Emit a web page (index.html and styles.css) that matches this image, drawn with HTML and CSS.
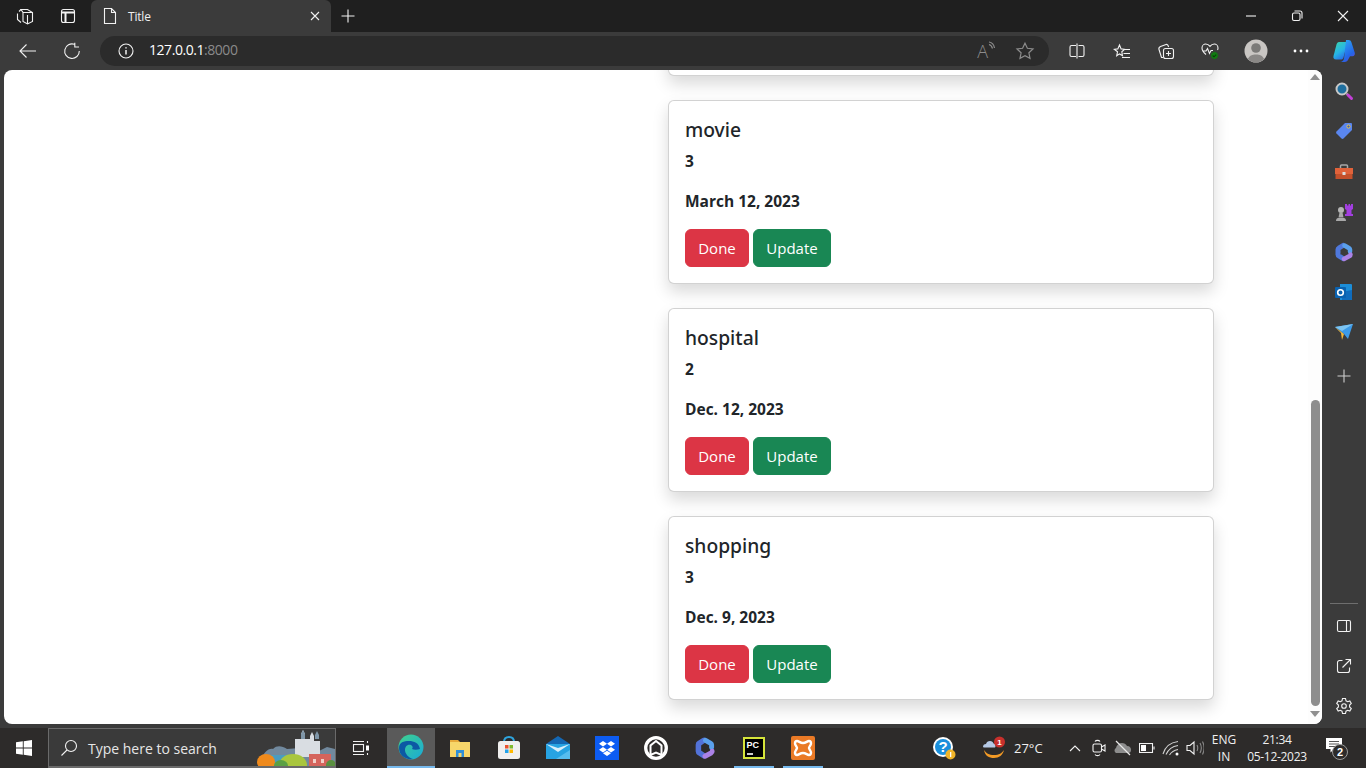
FILE: index.html
```html
<!DOCTYPE html>
<html lang="en">
<head>
<meta charset="utf-8">
<title>Title</title>
<link rel="stylesheet" href="styles.css">
</head>
<body>
<div class="tabstrip">
  <span class="slot s-w1"><svg width="20" height="20" viewBox="0 0 20 20" class="st"><path d="M5 3.500h6.500l5 3v9l-5 2.500-4.500-2.500V6.500zM3 5.500 5 3.500M1.500 7.500v6l3.500 3M7 6.500h9.500M11.500 9v9"/></svg></span>
  <span class="slot s-w2"><svg width="18" height="18" viewBox="0 0 18 18" class="st"><rect x="2.500" y="2.500" width="13" height="13" rx="2"/><path d="M2.500 5.500h13M6.500 5.500v10" stroke-width="2"/></svg></span>
  <div class="tab">
    <svg width="16" height="18" viewBox="0 0 16 18" class="st"><path d="M2.500 1.500h7l4 4v11h-11zM9.500 1.500v4h4"/></svg>
    <span class="tab-title">Title</span>
    <svg width="12" height="12" viewBox="0 0 12 12" class="st tab-x"><path d="M2 2l8 8M10 2l-8 8"/></svg>
  </div>
  <span class="slot s-plus"><svg width="16" height="16" viewBox="0 0 16 16" class="st"><path d="M8 1.500v13M1.500 8h13"/></svg></span>
  <div class="winctl">
    <span class="slot s-win"><svg width="12" height="12" viewBox="0 0 12 12" class="st"><path d="M1 6h10"/></svg></span>
    <span class="slot s-win"><svg width="12" height="12" viewBox="0 0 12 12" class="st"><rect x="1.500" y="3" width="7.500" height="7.500" rx="1.500"/><path d="M3.500 1h5.500a2 2 0 0 1 2 2v5.500"/></svg></span>
    <span class="slot s-win"><svg width="12" height="12" viewBox="0 0 12 12" class="st"><path d="M1 1l10 10M11 1L1 11"/></svg></span>
  </div>
</div>

<div class="toolbar">
  <span class="slot s-back"><svg width="20" height="16" viewBox="0 0 20 16" class="st"><path d="M18 8H2M8.500 1.500 2 8l6.500 6.500"/></svg></span>
  <span class="slot s-reload"><svg width="18" height="18" viewBox="0 0 18 18" class="st"><path d="M11.500 2.300A7.300 7.300 0 1 0 16.300 9M11.800 .8v4.200h4.200"/></svg></span>
  <div class="address">
    <svg class="st addr-info" width="16" height="16" viewBox="0 0 16 16"><circle cx="8" cy="8" r="7"/><path d="M8 7v4.500M8 4.200v1.300" stroke-width="1.500"/></svg>
    <span class="url"><span class="url-host">127.0.0.1</span><span class="url-port">:8000</span></span>
    <span class="addr-actions">
      <span class="read">A<svg width="8" height="10" viewBox="0 0 8 10" class="st-dim"><path d="M1 1c3 .5 5 3 5.500 6M1 3.500c2 .5 3 2 3.500 4"/></svg></span>
      <svg width="20" height="20" viewBox="0 0 20 20" class="st-dim"><path d="M10 2.200l2.400 5.100 5.600.7-4.100 3.800 1.100 5.500L10 14.600l-5 2.700 1.100-5.500L2 8l5.600-.7z"/></svg>
    </span>
  </div>
  <div class="tools">
    <span class="slot s-tool t1"><svg width="16" height="16" viewBox="0 0 16 16" class="st"><path d="M7 2.500H2.500a1.500 1.500 0 0 0-1.500 1.500v8a1.500 1.500 0 0 0 1.500 1.500H7M9.500 2.500h4a1.500 1.500 0 0 1 1.500 1.500v8a1.500 1.500 0 0 1-1.500 1.500h-4M8 .5v15"/></svg></span>
    <span class="slot s-tool t2"><svg width="18" height="18" viewBox="0 0 18 18" class="st"><path d="M6.500 1.500l1.600 3.900 3.400.4-2.700 2.500.7 3.800-3-1.700-2.800 1.900.8-4L1.300 5.800l3.500-.4zM11 6h6M10.500 10h6.500M9 14h8" transform="translate(0 1.500)"/></svg></span>
    <span class="slot s-tool t3"><svg width="18" height="18" viewBox="0 0 18 18" class="st"><path d="M6 15.500H4.500L2 7.500c-.5-1.500.5-2.500 1.500-3L9 2.500c1-.3 2 .3 2.300 1.500l.3 1"/><rect x="6.500" y="6.500" width="10" height="10" rx="2"/><path d="M11.500 9v5M9 11.500h5"/></svg></span>
    <span class="slot s-tool t4"><svg width="18" height="18" viewBox="0 0 18 18" class="st"><path d="M5 12.500C2.500 10.500 1 8.500 1 6c0-2.500 2-4 3.700-4C6.500 2 8 3 9 4.300 10 3 11.500 2 13.300 2 15 2 17 3.500 17 6c0 .8-.2 1.500-.5 2M1.500 9h3.500l1.500-2.500 2 5 1.500-3h2"/><circle cx="13.500" cy="13.500" r="4" class="heal"/><path d="M11.700 13.500l1.300 1.300 2.200-2.200" class="healck"/></svg></span>
    <span class="slot s-avatar"><svg width="24" height="24" viewBox="0 0 24 24"><circle cx="12" cy="12" r="11.500" fill="#c9c6c3"/><circle cx="12" cy="9" r="4.800" fill="#7b7a78"/><path d="M3.800 20c1.500-3.500 4.500-4.600 8.200-4.600s6.700 1.100 8.200 4.600a11.500 11.500 0 0 1-16.400 0z" fill="#8a8886"/></svg></span>
    <span class="slot s-tool t5"><svg width="16" height="4" viewBox="0 0 16 4" class="fillw"><circle cx="2" cy="2" r="1.400"/><circle cx="8" cy="2" r="1.400"/><circle cx="14" cy="2" r="1.400"/></svg></span>
    <span class="slot s-copilot"><svg width="24" height="24" viewBox="0 0 24 24"><defs><linearGradient id="cp1" x1="0" y1="0" x2=".6" y2="1"><stop offset="0" stop-color="#3ad6a8"/><stop offset=".6" stop-color="#27b4e6"/><stop offset="1" stop-color="#2a6fe8"/></linearGradient><linearGradient id="cp2" x1=".2" y1="0" x2=".8" y2="1"><stop offset="0" stop-color="#2fa8f4"/><stop offset=".7" stop-color="#2466e8"/><stop offset="1" stop-color="#5b49d8"/></linearGradient></defs><path d="M7 3h8.500l-4 15.500c-.4 1.500-1.300 2-2.500 2H4C2 20.500 1 19 1.500 17L4.500 5.500C5 4 5.700 3 7 3z" fill="url(#cp1)"/><path d="M14 1h2.500c1.500 0 2.500.8 3 2.500l3.200 10c.6 2-.3 3.700-2.200 3.700H18L16.500 20c-.8 2-2 3-4 3H8c2.200 0 3.500-1.300 4-3.200z" fill="url(#cp2)"/></svg></span>
  </div>
</div>

<div class="mainrow">
  <div class="page">
    <div class="viewport">
      <div class="cards">
        <div class="card"></div>
        <article class="card"><h5 class="card-title">movie</h5><h6 class="card-num">3</h6><h6 class="card-date">March 12, 2023</h6><div class="btns"><button class="btn btn-done">Done</button> <button class="btn btn-update">Update</button></div></article>
        <article class="card"><h5 class="card-title">hospital</h5><h6 class="card-num">2</h6><h6 class="card-date">Dec. 12, 2023</h6><div class="btns"><button class="btn btn-done">Done</button> <button class="btn btn-update">Update</button></div></article>
        <article class="card"><h5 class="card-title">shopping</h5><h6 class="card-num">3</h6><h6 class="card-date">Dec. 9, 2023</h6><div class="btns"><button class="btn btn-done">Done</button> <button class="btn btn-update">Update</button></div></article>
      </div>
    </div>
    <div class="scrollbar">
      <span class="arrow-up"></span>
      <span class="thumb"></span>
      <span class="arrow-down"></span>
    </div>
  </div>
  <aside class="sidebar">
    <div class="side-top">
      <span class="side-item"><svg width="20" height="20" viewBox="0 0 20 20"><circle cx="8" cy="8" r="5.500" fill="#1f6f9f" stroke="#c8c8c8" stroke-width="2"/><path d="M12.500 12.500l1.500 1.500" stroke="#aaa" stroke-width="2"/><path d="M14 14l3.500 3.500" stroke="#c23fd6" stroke-width="3" stroke-linecap="round"/></svg></span>
      <span class="side-item"><svg width="20" height="20" viewBox="0 0 20 20"><path d="M11 2h6a1 1 0 0 1 1 1v6L9.500 17.500a1.500 1.500 0 0 1-2 0l-5-5a1.500 1.500 0 0 1 0-2z" fill="#5a86ee"/><circle cx="14.500" cy="5.500" r="1.600" fill="#3a5bb8" stroke="#f3cb3a"/></svg></span>
      <span class="side-item"><svg width="20" height="20" viewBox="0 0 20 20"><path d="M6.500 6V4c0-.7.500-1 1-1h5c.5 0 1 .3 1 1v2" fill="none" stroke="#a8a8a8" stroke-width="1.500"/><rect x="1" y="6" width="18" height="6" fill="#e0623a"/><rect x="1.500" y="12" width="17" height="5" fill="#c4502b"/><rect x="8.500" y="10" width="3" height="3" fill="#ddd"/></svg></span>
      <span class="side-item"><svg width="20" height="20" viewBox="0 0 20 20"><circle cx="7" cy="8" r="3" fill="#b5b5b5"/><path d="M5.500 10.500h3l1 5h-5zM2 19c0-2 1-3 2-3h6c1 0 2 1 2 3z" fill="#a8a8a8"/><path d="M11 2h2v1.500h1.500V2h1.500v1.500h1V2H19v5l-1.500 1v4H19v2h-8v-2h1.500V8L11 7z" fill="#a23ee0"/></svg></span>
      <span class="side-item"><svg width="20" height="20" viewBox="0 0 20 20"><path d="M9 3.500 4.800 6.200a1.500 1.500 0 0 0-.8 1.300v5a1.500 1.500 0 0 0 .8 1.300L9 16.500" fill="none" stroke="#4f78dc" stroke-width="5" stroke-linecap="round"/><path d="M10.500 3.500l4.700 2.800c.5.300.8.800.8 1.300V9.500" fill="none" stroke="#5aa0ec" stroke-width="4.500" stroke-linecap="round"/><path d="M16.500 12.500c0 .8-.5 1.300-1 1.600L10 17" fill="none" stroke="#ab82e6" stroke-width="4.500" stroke-linecap="round"/></svg></span>
      <span class="side-item"><svg width="20" height="20" viewBox="0 0 20 20"><path d="M6 2h11a1 1 0 0 1 1 1v14a1 1 0 0 1-1 1H6z" fill="#1c8ed8"/><path d="M8 10l10-2v9a1 1 0 0 1-1 1H8z" fill="#0f6cbd"/><rect x="1" y="5" width="11" height="11" rx="1" fill="#0a62b0"/><circle cx="6.500" cy="10.500" r="2.800" fill="none" stroke="#fff" stroke-width="1.600"/></svg></span>
      <span class="side-item"><svg width="20" height="20" viewBox="0 0 20 20"><path d="M1 5l18-3-5 15-4-5z" fill="#3d9be8"/><path d="M1 5l9 7-2 6-1-7z" fill="#f3b83a"/><path d="M19 2 8 9 1 5z" fill="#7cc4f2"/></svg></span>
      <span class="side-item side-plus"><svg width="14" height="14" viewBox="0 0 14 14" class="st-soft"><path d="M7 .5v13M.5 7h13"/></svg></span>
    </div>
    <div class="side-bottom">
      <div class="side-rule"></div>
      <span class="side-item"><svg width="16" height="14" viewBox="0 0 16 14" class="st"><rect x="1.500" y="1.500" width="13" height="11" rx="1.500"/><path d="M10.500 1.500v11"/></svg></span>
      <span class="side-item"><svg width="16" height="16" viewBox="0 0 16 16" class="st"><path d="M6.500 2.500H3.500a2 2 0 0 0-2 2v8a2 2 0 0 0 2 2h8a2 2 0 0 0 2-2V9.500M6.500 9.500l8-8M9.500 1.500h5v5"/></svg></span>
      <span class="side-item"><svg width="18" height="18" viewBox="0 0 18 18" class="st"><path d="M7.500 1.500h3l.5 2.300 1.600.9 2.200-.8 1.500 2.600-1.700 1.600v1.800l1.700 1.600-1.500 2.600-2.200-.8-1.600.9-.5 2.300h-3L7 14.200l-1.600-.9-2.200.8-1.500-2.600 1.700-1.600V8.100L1.700 6.500l1.500-2.600 2.200.8L7 3.800z"/><circle cx="9" cy="9" r="2.300"/></svg></span>
    </div>
  </aside>
</div>
<div class="winbottom"></div>

<footer class="taskbar">
  <span class="tb-start"><svg width="16" height="16" viewBox="0 0 16 16" class="fillw"><path d="M0 2.300 6.800 1.300v6.300H0zM7.700 1.200 16 0v7.600H7.700zM0 8.400h6.800v6.300L0 13.700zM7.700 8.400H16V16l-8.300-1.200z"/></svg></span>
  <div class="search">
    <svg width="18" height="18" viewBox="0 0 18 18" class="st"><circle cx="11" cy="7" r="5.500"/><path d="M7 11 1.500 16.500"/></svg>
    <span class="search-text">Type here to search</span>
    <svg class="castle" width="78" height="38" viewBox="0 0 78 38"><path d="M4 30c3-6 7-11 12-10 4-4 9-3 14 0l26-2 6 4 8-4 8 2v18H4z" fill="#71899e"/><path d="M8 26h34v12H8z" fill="#4a9cc0"/><path d="M38 10h6V5l2-4 2 4v5h5V7l2-4 2 4v5h6v16H38z" fill="#d9dde2"/><path d="M44 10V5l2-4 2 4v5zM58 10V6l2-4 2 4v4z" fill="#7f96a8"/><rect x="52" y="25" width="22" height="13" fill="#d5645c"/><rect x="56" y="30" width="3" height="4" fill="#f0d0c8"/><rect x="64" y="30" width="3" height="4" fill="#f0d0c8"/><ellipse cx="9" cy="33" rx="9" ry="8" fill="#ef8a1c"/><ellipse cx="36" cy="36" rx="14" ry="11" fill="#a9c63e"/><ellipse cx="24" cy="37" rx="7" ry="6" fill="#5ba043"/><circle cx="74" cy="36" r="5" fill="#5a9040"/></svg>
  </div>
  <span class="tb-task"><svg width="18" height="16" viewBox="0 0 18 16" class="st"><path d="M1 1.500h11M1 14.500h11"/><rect x="1.500" y="4.500" width="10" height="7"/><path d="M15.500 1v2M15.500 13v2"/><rect x="14" y="5.500" width="3" height="5" class="fillw"/></svg></span>
  <span class="tb-app tb-edge"><svg width="26" height="26" viewBox="0 0 26 26"><defs><linearGradient id="ed" x1="0" y1="0" x2="1" y2="1"><stop offset="0" stop-color="#3fd28c"/><stop offset="1" stop-color="#1aa9d8"/></linearGradient></defs><circle cx="13" cy="13" r="12.500" fill="url(#ed)"/><path d="M1 14C1 8 6 7 11 7c5 0 10 2 11 8-3 1-6 1-8 0 1-1 1-3-1-4-4-1-6 2-6 5 0 4 4 8 8 9-8 1-14-4-14-11z" fill="#0c59a4"/></svg></span>
  <span class="tb-app"><svg width="22" height="20" viewBox="0 0 22 20"><path d="M1 2h8l2 2h10v15H1z" fill="#e7a93a"/><rect x="1" y="4" width="20" height="15" fill="#f7d66a"/><path d="M7 19v-7h8v7h-2.500v-4h-3v4z" fill="#2f8fd8"/></svg></span>
  <span class="tb-app"><svg width="24" height="24" viewBox="0 0 24 24"><path d="M7 6c0-3 1-5 5-5s5 2 5 5" fill="none" stroke="#2ea4dd" stroke-width="2"/><rect x="1" y="5" width="22" height="18" rx="2.500" fill="#f0efee"/><rect x="8" y="9" width="3.500" height="3.500" fill="#e8522f"/><rect x="12.500" y="9" width="3.500" height="3.500" fill="#7fba2d"/><rect x="8" y="13.500" width="3.500" height="3.500" fill="#23a2ea"/><rect x="12.500" y="13.500" width="3.500" height="3.500" fill="#ffb900"/></svg></span>
  <span class="tb-app"><svg width="24" height="24" viewBox="0 0 24 24"><path d="M0 8 12 0l12 8v15H0z" fill="#1467b3"/><path d="M0 8h24v15H0z" fill="#27a3e2"/><path d="M0 8l12 8 12-8-12 4z" fill="#d7eefb"/><path d="M24 23H10l14-9z" fill="#57bdee"/></svg></span>
  <span class="tb-app"><svg width="24" height="24" viewBox="0 0 24 24"><rect width="24" height="24" fill="#0d5cf2"/><path d="M8 5l4 2.800L8 10.500 4 7.800zM16 5l4 2.800-4 2.700-4-2.700zM8 11l4 2.700-4 2.800-4-2.800zM16 11l4 2.700-4 2.800-4-2.800zM8 17.300l4-2.600 4 2.600-4 2.700z" fill="#fff"/></svg></span>
  <span class="tb-app"><svg width="24" height="24" viewBox="0 0 24 24"><circle cx="12" cy="12" r="10.300" fill="none" stroke="#fff" stroke-width="3.300"/><path d="M6.500 19V9.500L12 5l5.500 4.500V19L12 16.500z" fill="none" stroke="#fff" stroke-width="2"/></svg></span>
  <span class="tb-app"><svg width="22" height="24" viewBox="0 0 20 20"><path d="M9 3 4.800 5.700a1.500 1.500 0 0 0-.8 1.300v6a1.500 1.500 0 0 0 .8 1.300L9 17" fill="none" stroke="#5272d8" stroke-width="5" stroke-linecap="round"/><path d="M10.500 3l4.700 2.800c.5.300.8.800.8 1.300V9.500" fill="none" stroke="#5aa0ec" stroke-width="4.500" stroke-linecap="round"/><path d="M16.500 13c0 .8-.5 1.300-1 1.600L10 17.500" fill="none" stroke="#ab82e6" stroke-width="4.500" stroke-linecap="round"/></svg></span>
  <span class="tb-app tb-open"><span class="pc-logo"><span class="pc-text">PC</span><span class="pc-bar"></span></span></span>
  <span class="tb-app tb-open"><svg width="24" height="24" viewBox="0 0 24 24"><rect width="24" height="24" rx="2" fill="#ea7a26"/><path d="M6 5c2 0 3 2 6 2s4-2 6-2c1.500 0 2 1 2 2.500S18 11 18 12s2 3 2 4.500S19.500 19 18 19c-2 0-3-2-6-2s-4 2-6 2c-1.500 0-2-1-2-2.500S6 13 6 12 4 9 4 7.500 4.500 5 6 5z" fill="none" stroke="#fff" stroke-width="2.400"/></svg></span>

  <div class="tray">
    <span class="tr-help"><svg width="24" height="24" viewBox="0 0 24 24"><circle cx="11" cy="11" r="10" fill="#fff"/><circle cx="11" cy="11" r="8" fill="#1a8fdc"/><text x="11" y="16" text-anchor="middle" class="help-q">?</text><circle cx="18.500" cy="18.500" r="5" fill="#f0b429"/><rect x="18" y="16" width="1.300" height="5" fill="#fff"/></svg></span>
    <span class="tr-weather"><svg width="24" height="24" viewBox="0 0 24 24"><path d="M2 14c1 6 5 8 10 8s9-3 10-8c-2 3-5 5-10 5S4 17 2 14z" fill="#f39a25"/><path d="M1 11c0-2 1-3 3-3 .5-2 2-3 4-3s3 1 3.500 2.500c1.500 0 2 1 2 2.500 0 .5 0 1-.5 1.500H2c-.5 0-1-.2-1-.5z" fill="#b5c9e6"/><circle cx="17.500" cy="6" r="5.500" fill="#c8302c"/><text x="17.500" y="9" text-anchor="middle" class="badge-n">1</text></svg></span>
    <span class="tr-temp">27°C</span>
    <span class="tr-icon tr-chev"><svg width="12" height="8" viewBox="0 0 12 8" class="st"><path d="M1 7l5-5 5 5"/></svg></span>
    <span class="tr-icon"><svg width="14" height="18" viewBox="0 0 14 18" class="st"><path d="M3 2.500c1-1.500 4-1.500 5 0M3 15.500c1 1.500 4 1.500 5 0"/><rect x="1" y="5" width="8.500" height="8" rx="1.500"/><path d="M9.500 8l3.500-2v6l-3.500-2"/></svg></span>
    <span class="tr-icon"><svg width="18" height="16" viewBox="0 0 18 16"><path d="M2 13c-2-1-2-4 0-5 .5-3 3-5 6-5 2 0 4 1 5 3 3 0 4 2 4 4s-1 3-3 3z" fill="#8d8d8d"/><path d="M2 1l14 14" stroke="#e8e8e8" stroke-width="1.300"/></svg></span>
    <span class="tr-icon"><svg width="16" height="10" viewBox="0 0 16 10" class="st"><rect x=".5" y=".5" width="13" height="9"/><rect x="2" y="2" width="5" height="6" class="fillw"/><path d="M15 3.500v3"/></svg></span>
    <span class="tr-icon"><svg width="18" height="16" viewBox="0 0 18 16" class="st-soft"><path d="M1 14C3 7 8 2.500 16 1.500M4 14.500C6 10 9.500 6.500 16 5.500M7.500 15C9 12.500 11 10.500 16 9.500"/><circle cx="15" cy="14" r="1.500" class="fillw"/></svg></span>
    <span class="tr-icon"><svg width="18" height="16" viewBox="0 0 18 16" class="st"><path d="M1 5.500h3l4-3.500v12l-4-3.500H1z"/><path d="M11 5c1 2 1 4 0 6M14 3c1.600 3 1.600 7 0 10M16.500 1.500c2 4 2 9 0 13" stroke="#8a8a8a"/></svg></span>
    <span class="tr-lang"><span>ENG</span><span>IN</span></span>
    <span class="tr-clock"><span>21:34</span><span>05-12-2023</span></span>
    <span class="tr-notif"><svg width="24" height="24" viewBox="0 0 24 24"><path d="M1 2h16v11h-8l-3.500 3.500V13H1z" fill="#fff"/><path d="M4 5.500h10M4 8h10M4 10.500h7" stroke="#555" stroke-width="1"/><circle cx="15" cy="16" r="7.500" fill="#2d2b2a" stroke="#9a9a9a"/><text x="15" y="20" text-anchor="middle" class="notif-n">2</text></svg></span>
  </div>
</footer>
</body>
</html>
```
FILE: styles.css
```css
* { box-sizing: border-box; }
html, body { margin: 0; height: 100%; overflow: hidden; }
body {
  display: flex; flex-direction: column; width: 1366px; height: 768px;
  background: #3b3b3b; color: #fff;
  font-family: "Open Sans", "Noto Sans", sans-serif;
}
svg { display: block; flex: none; }
.st { fill: none; stroke: #f2f2f2; stroke-width: 1.100; }
.st-dim { fill: none; stroke: #8c8c8c; stroke-width: 1.200; }
.st-soft { fill: none; stroke: #cfcfcf; stroke-width: 1.100; }
.fillw { fill: #fff; stroke: none; }
.heal { fill: #107c10; stroke: #3b3b3b; stroke-width: 1; }
.healck { stroke: #0c3f0c; }
.slot { display: flex; align-items: center; justify-content: center; flex: none; }

/* tab strip */
.tabstrip { display: flex; height: 32px; background: #1f1f1f; flex: none; }
.s-w1 { width: 52px; }
.s-w2 { width: 32px; }
.tab {
  width: 240px; margin-left: 7px; height: 32px; background: #3b3b3b;
  border-radius: 6px 6px 0 0; display: flex; align-items: center; padding: 0 10px 0 11px;
}
.tab-title { font-size: 12px; margin-left: 10px; flex: 1; color: #f0f0f0; letter-spacing: -.2px; }
.s-plus { width: 34px; }
.winctl { margin-left: auto; display: flex; }
.s-win { width: 46px; }

/* toolbar */
.toolbar { display: flex; height: 38px; align-items: center; flex: none; }
.s-back { width: 56px; }
.s-reload { width: 32px; }
.address {
  width: 950px; margin-left: 12px; height: 30px; background: #2b2b2b; border-radius: 15px;
  display: flex; align-items: center; padding: 0 14px 0 18px;
}
.url { font-size: 14px; line-height: 18px; margin: -2px 0 0 15px; letter-spacing: -.45px; }
.url-host { color: #fff; }
.url-port { color: #8a8a8a; }
.addr-actions { margin-left: auto; display: flex; align-items: center; gap: 19px; }
.read { display: flex; align-items: flex-start; color: #8c8c8c; font-size: 18px; font-weight: 300; line-height: 20px; }
.tools { display: flex; align-items: center; }
.s-tool { height: 30px; }
.t1 { width: 44px; margin-left: 6px; }
.t2 { width: 45px; }
.t3 { width: 44px; }
.t4 { width: 44px; }
.s-avatar { width: 48px; }
.t5 { width: 42px; }
.s-copilot { width: 44px; }

/* main */
.mainrow { display: flex; height: 654px; padding-left: 4px; flex: none; }
.page {
  width: 1318px; display: flex; background: #fff; border-radius: 8px; overflow: hidden; color: #212529;
}
.viewport { flex: 1; overflow: hidden; padding: 0 94px 0 664px; }
.cards { margin-top: -178px; display: flex; flex-direction: column; gap: 24px; }
.card {
  height: 184px; padding: 16px; background: #fff; border: 1px solid rgba(0,0,0,.175); border-radius: 6px;
  box-shadow: 0 8px 16px rgba(0,0,0,.15); flex: none;
}
.card-title { margin: 0 0 9px; font: 500 19.250px/26px "Noto Sans", "Open Sans", sans-serif; }
.card-num { margin: 0 0 21px; font-size: 15.500px; line-height: 19px; font-weight: 700; }
.card-date { margin: 0 0 18px; font-size: 15.500px; line-height: 19px; font-weight: 700; }
.btns { display: flex; gap: 4px; }
.btn {
  height: 38px; border: 1px solid; border-radius: 6px; padding: 0; color: #fff;
  font: 400 15px/1.5 "Open Sans", "Noto Sans", sans-serif;
}
.btn-done { width: 64px; background: #dc3545; border-color: #dc3545; }
.btn-update { width: 78px; background: #198754; border-color: #198754; }

/* scrollbar */
.scrollbar {
  width: 14px; background: #fdfdfd; display: flex; flex-direction: column; align-items: center;
  padding-top: 4px; flex: none;
}
.arrow-up { width: 0; height: 0; border: 5px solid transparent; border-top: 0; border-bottom: 6px solid #8f8f8f; }
.arrow-down { width: 0; height: 0; border: 5px solid transparent; border-bottom: 0; border-top: 6px solid #8f8f8f; margin-top: 5px; }
.thumb { width: 9px; height: 306px; margin-top: 320px; border-radius: 5px; background: #8e8e8e; }

/* sidebar */
.sidebar { width: 44px; display: flex; flex-direction: column; justify-content: space-between; padding-top: 1px; }
.side-top { display: flex; flex-direction: column; }
.side-item { height: 40px; display: flex; align-items: center; justify-content: center; flex: none; }
.side-item:nth-child(3) { margin-top: 1px; }
.side-plus { margin-top: 4px; }
.side-bottom { display: flex; flex-direction: column; margin-bottom: -2px; }
.side-rule { height: 1px; background: #6e6e6e; margin: 0 8px 2px; }
.side-bottom .side-item:nth-child(3) { margin-top: 0; }
.winbottom { height: 4px; background: #3b3b3b; flex: none; }

/* taskbar */
.taskbar { height: 40px; display: flex; align-items: center; background: #2d2b2a; flex: none; }
.tb-start { width: 48px; display: flex; justify-content: center; }
.search {
  width: 288px; height: 40px; background: #3a3a3a; border: 1px solid #6a6a6a; border-bottom-width: 2px;
  display: flex; align-items: center; padding-left: 11px; overflow: hidden; flex: none;
}
.search-text { font-size: 14px; margin: 2px 0 0 10px; color: #e6e6e6; }
.castle { margin-left: auto; }
.tb-task { width: 51px; display: flex; justify-content: center; padding-right: 2px; }
.tb-app { width: 49px; height: 40px; display: flex; align-items: center; justify-content: center; flex: none; }
.tb-edge { width: 48px; background: #5a5a5a; border-bottom: 2px solid #76b9ed; }
.tb-open { position: relative; }
.tb-open::after { content: ""; position: absolute; left: 5px; right: 4px; bottom: 0; height: 2px; background: #76b9ed; }
.pc-logo { width: 22px; height: 22px; background: #000; border: 2px solid #d5e43a; display: flex; flex-direction: column; padding: 1px 2px; }
.pc-text { font: 700 9px/10px "Liberation Sans", sans-serif; color: #fff; }
.pc-bar { width: 6px; height: 1.500px; margin-top: 3px; background: #ccc; }
.tray { margin-left: auto; display: flex; align-items: center; height: 40px; }
.tr-help { width: 24px; margin-right: 26px; }
.tr-weather { width: 24px; margin-right: 8px; }
.tr-temp { font-size: 13px; width: 44px; color: #f0f0f0; }
.tr-icon { width: 24px; display: flex; justify-content: center; }
.tr-chev { margin-left: 5px; }
.tr-lang, .tr-clock { display: flex; flex-direction: column; align-items: center; font-size: 12px; line-height: 17px; color: #f0f0f0; }
.tr-lang { width: 34px; }
.tr-clock { width: 70px; margin-left: 1px; letter-spacing: -.3px; }
.tr-notif { width: 24px; margin-left: 13px; margin-right: 17px; }
.help-q { font: 700 15px "Liberation Sans", sans-serif; fill: #fff; }
.badge-n { font: 700 8px "Liberation Sans", sans-serif; fill: #fff; }
.notif-n { font: 700 11px "Liberation Sans", sans-serif; fill: #fff; }
```
